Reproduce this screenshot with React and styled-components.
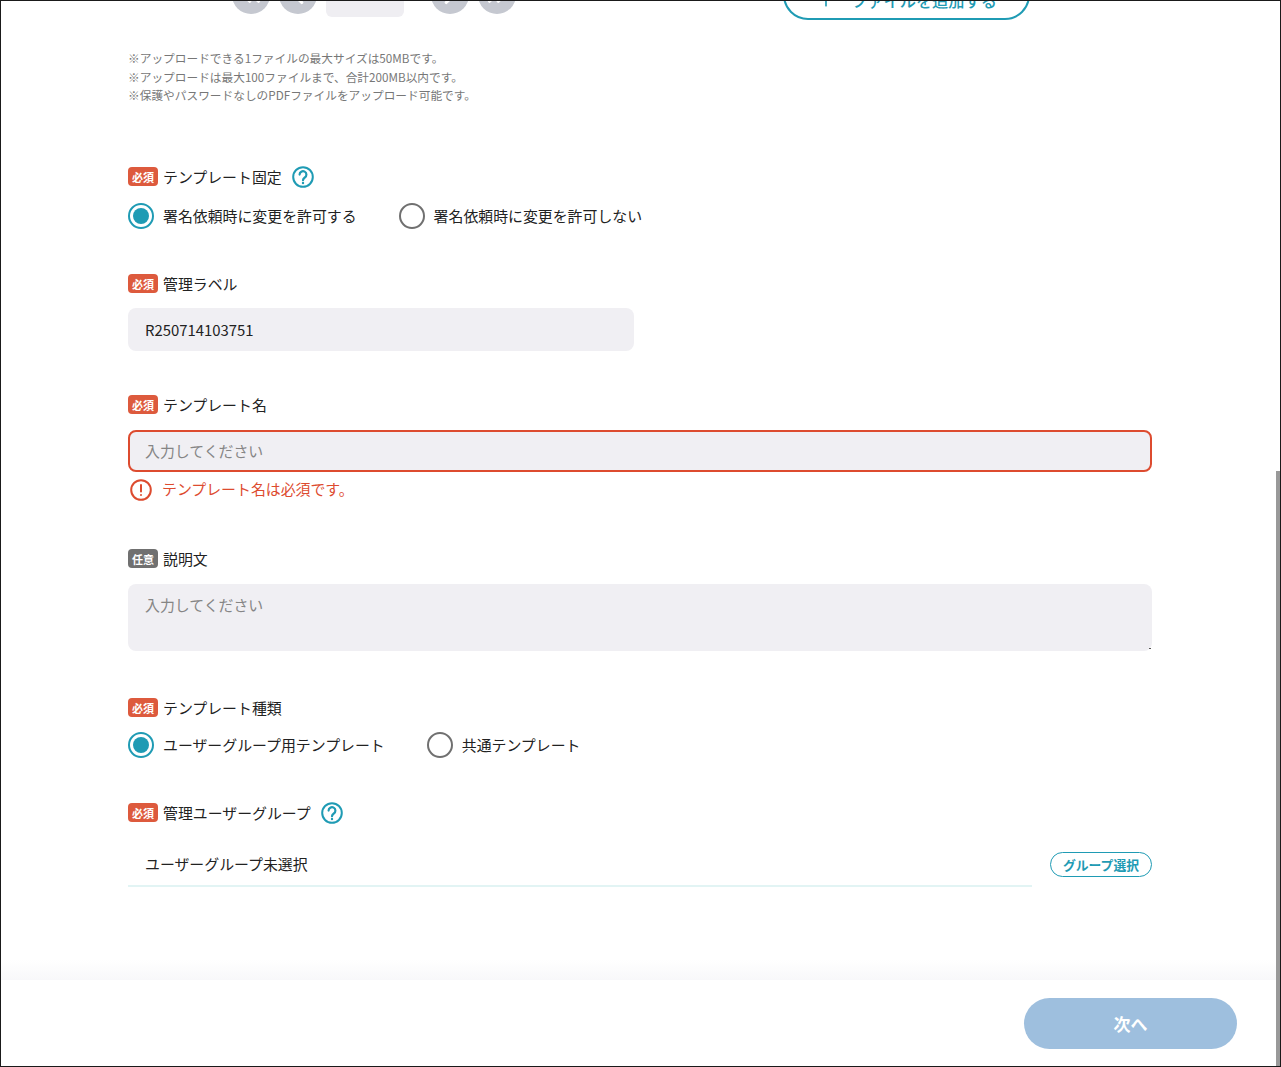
import React from 'react';
import styled, { createGlobalStyle } from 'styled-components';
import { ChevronLeft, ChevronRight, ChevronsLeft, ChevronsRight, Plus } from 'lucide-react';

const teal = '#1f9bb4';
const red = '#dd4b2f';

const GlobalStyle = createGlobalStyle`
  html, body {
    margin: 0;
    padding: 0;
    background: #fff;
  }
  body {
    font-family: "Noto Sans CJK JP", "Noto Sans", sans-serif;
    color: #222;
    overflow: hidden;
  }
  * {
    box-sizing: border-box;
  }
`;

const Frame = styled.div`
  position: relative;
  display: flex;
  flex-direction: column;
  width: 1281px;
  height: 1067px;
  border: 1px solid #1a1a1a;
  overflow: hidden;
  background: #fff;
`;

const Main = styled.main`
  flex: 1;
  min-height: 0;
  overflow: hidden;
  padding: 0 128px 0 127px;
`;

const Scrollbar = styled.div`
  position: absolute;
  top: 470px;
  right: 0;
  bottom: 0;
  width: 4px;
  background: #999;
  z-index: 2;
`;

const TopBar = styled.div`
  display: flex;
  align-items: flex-start;
  height: 50px;
  margin-top: -31px;
`;

const Pager = styled.div`
  display: flex;
  align-items: flex-end;
  margin-left: 103.5px;
  height: 47px;
`;

const PageButton = styled.span`
  display: flex;
  align-items: center;
  justify-content: center;
  width: 38px;
  height: 38px;
  margin: 0 9px 3px 0;
  border-radius: 50%;
  background: #c5c8d0;
  color: #fff;
`;

const PageInput = styled.span`
  width: 78px;
  height: 40px;
  margin-right: 27px;
  border-radius: 6px;
  background: #efeef2;
`;

const UploadButton = styled.button`
  display: flex;
  align-items: center;
  justify-content: center;
  gap: 15px;
  width: 247px;
  height: 50px;
  margin: 0 122px 0 auto;
  padding: 10px 0 0;
  border: 2px solid ${teal};
  border-radius: 25px;
  background: #fff;
  color: ${teal};
  font: 500 16.2px "Noto Sans CJK JP", sans-serif;
`;

const Notes = styled.div`
  margin-top: 29px;
  color: #777;
  font-size: 11.7px;
  line-height: 18.5px;
`;

const Field = styled.section`
  display: flex;
  flex-direction: column;
  margin-top: ${({ $top }) => $top}px;
`;

const LabelRow = styled.div`
  display: flex;
  align-items: center;
  gap: 5px;
  height: 20px;
  margin-bottom: ${({ $below }) => $below}px;
  font-size: 14.9px;
`;

const Badge = styled.span`
  display: flex;
  align-items: center;
  justify-content: center;
  width: 30px;
  height: 19px;
  border-radius: 4px;
  background: ${({ $optional }) => ($optional ? '#707070' : '#dd5a3d')};
  color: #fff;
  font-size: 11px;
  font-weight: 700;
`;

const HelpIcon = styled.svg`
  width: 22px;
  height: 22px;
  margin-left: 5px;
  color: ${teal};
`;

const RadioRow = styled.div`
  display: flex;
  gap: 42px;
`;

const RadioItem = styled.label`
  display: flex;
  align-items: center;
  gap: 9px;
  height: 26px;
  font-size: 14.9px;
`;

const RadioMark = styled.span`
  display: flex;
  align-items: center;
  justify-content: center;
  width: 26px;
  height: 26px;
  border: 2px solid ${({ $on }) => ($on ? teal : '#707070')};
  border-radius: 50%;
  &::after {
    content: '';
    width: 16px;
    height: 16px;
    border-radius: 50%;
    background: ${({ $on }) => ($on ? teal : 'transparent')};
  }
`;

const TextInput = styled.input`
  display: block;
  width: ${({ $w }) => $w || '100%'};
  height: ${({ $h }) => $h}px;
  padding: 0 ${({ $error }) => ($error ? 15 : 17)}px;
  border: ${({ $error }) => ($error ? `2px solid ${red}` : 'none')};
  border-radius: 8px;
  background: #f0eff3;
  color: #222;
  font: 14.9px "Noto Sans CJK JP", sans-serif;
  outline: none;
  &::placeholder {
    color: #858585;
    opacity: 1;
  }
`;

const TextArea = styled.textarea`
  display: block;
  width: 100%;
  height: 67px;
  padding: 11px 17px;
  border: none;
  border-radius: 8px;
  background: #f0eff3;
  font: 14.9px/20px "Noto Sans CJK JP", sans-serif;
  outline: none;
  resize: vertical;
  &::placeholder {
    color: #858585;
    opacity: 1;
  }
  &::-webkit-resizer {
    background: linear-gradient(#555, #555) no-repeat 12px 12px / 2px 1px;
  }
`;

const ErrorRow = styled.div`
  display: flex;
  align-items: center;
  gap: 10px;
  height: 22px;
  margin: 7px 0 0 2px;
  padding-bottom: 2px;
  color: ${red};
  font-size: 14.9px;
`;

const ErrorIcon = styled.svg`
  width: 22px;
  height: 22px;
  margin-top: 2px;
`;

const SelectRow = styled.div`
  display: flex;
  align-items: center;
  justify-content: space-between;
`;

const SelectValue = styled.div`
  display: flex;
  align-items: center;
  width: 904px;
  height: 44px;
  padding: 0 17px;
  border-bottom: 2px solid #e2f4f4;
  font-size: 14.9px;
`;

const GroupButton = styled.button`
  width: 102px;
  height: 25px;
  padding: 0;
  border: 1px solid ${teal};
  border-radius: 13px;
  background: #fff;
  color: ${teal};
  font: 700 12.8px "Noto Sans CJK JP", sans-serif;
`;

const Footer = styled.footer`
  position: relative;
  display: flex;
  justify-content: flex-end;
  height: 86px;
  padding: 18px 43px 0 0;
  background: #fff;
  &::before {
    content: '';
    position: absolute;
    left: 0;
    right: 0;
    top: -20px;
    height: 20px;
    background: linear-gradient(to bottom, rgba(246, 246, 249, 0), #f8f8fa);
  }
`;

const NextButton = styled.button`
  width: 213px;
  height: 51px;
  border: none;
  border-radius: 26px;
  background: #9ebfde;
  color: #fff;
  font: 700 17px "Noto Sans CJK JP", sans-serif;
`;

function Help() {
  return (
    <HelpIcon viewBox="0 0 22 22" fill="none" stroke="currentColor" strokeWidth="2" strokeLinecap="round">
      <circle cx="11" cy="11" r="9.8" />
      <path d="M7.6 8.6a3.4 3.4 0 1 1 5.2 2.9c-1.2.8-1.8 1.4-1.8 2.7" strokeWidth="2.2" />
      <path d="M11 17v.1" strokeWidth="2.4" />
    </HelpIcon>
  );
}

function Label({ optional, below, help, children }) {
  return (
    <LabelRow $below={below}>
      <Badge $optional={optional}>{optional ? '任意' : '必須'}</Badge>
      {children}
      {help && <Help />}
    </LabelRow>
  );
}

function Radio({ on, children }) {
  return (
    <RadioItem>
      <RadioMark $on={on} />
      {children}
    </RadioItem>
  );
}

function App() {
  return (
    <Frame>
      <GlobalStyle />
      <Scrollbar />
      <Main>
        <TopBar>
          <Pager>
            <PageButton><ChevronsLeft size={30} strokeWidth={2.5} /></PageButton>
            <PageButton><ChevronLeft size={30} strokeWidth={2.5} /></PageButton>
            <PageInput />
            <PageButton><ChevronRight size={30} strokeWidth={2.5} /></PageButton>
            <PageButton><ChevronsRight size={30} strokeWidth={2.5} /></PageButton>
          </Pager>
          <UploadButton>
            <Plus size={20} strokeWidth={2} />
            ファイルを追加する
          </UploadButton>
        </TopBar>

        <Notes>
          ※アップロードできる1ファイルの最大サイズは50MBです。
          <br />
          ※アップロードは最大100ファイルまで、合計200MB以内です。
          <br />
          ※保護やパスワードなしのPDFファイルをアップロード可能です。
        </Notes>

        <Field $top={62}>
          <Label below={16} help>テンプレート固定</Label>
          <RadioRow>
            <Radio on>署名依頼時に変更を許可する</Radio>
            <Radio>署名依頼時に変更を許可しない</Radio>
          </RadioRow>
        </Field>

        <Field $top={45}>
          <Label below={14}>管理ラベル</Label>
          <TextInput $w="506px" $h={43} defaultValue="R250714103751" />
        </Field>

        <Field $top={44}>
          <Label below={15}>テンプレート名</Label>
          <TextInput $h={42} $error placeholder="入力してください" />
          <ErrorRow>
            <ErrorIcon viewBox="0 0 22 22" fill="none" stroke="currentColor" strokeWidth="2" strokeLinecap="round">
              <circle cx="11" cy="11" r="9.8" />
              <path d="M11 6v6.5" />
              <path d="M11 16v.1" />
            </ErrorIcon>
            テンプレート名は必須です。
          </ErrorRow>
        </Field>

        <Field $top={48}>
          <Label below={15} optional>説明文</Label>
          <TextArea placeholder="入力してください" />
        </Field>

        <Field $top={47}>
          <Label below={14}>テンプレート種類</Label>
          <RadioRow>
            <Radio on>ユーザーグループ用テンプレート</Radio>
            <Radio>共通テンプレート</Radio>
          </RadioRow>
        </Field>

        <Field $top={45}>
          <Label below={20} help>管理ユーザーグループ</Label>
          <SelectRow>
            <SelectValue>ユーザーグループ未選択</SelectValue>
            <GroupButton>グループ選択</GroupButton>
          </SelectRow>
        </Field>
      </Main>
      <Footer>
        <NextButton>次へ</NextButton>
      </Footer>
    </Frame>
  );
}

export default App;
